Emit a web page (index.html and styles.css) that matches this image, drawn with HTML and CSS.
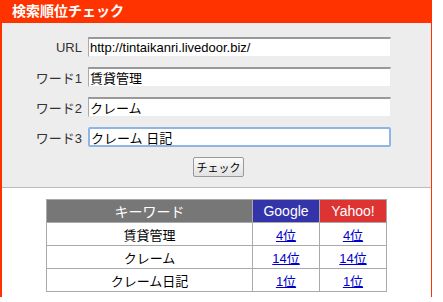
FILE: index.html
```html
<!DOCTYPE html>
<html lang="ja">
<head>
    <meta charset="UTF-8">
    <title>検索順位チェック</title>
    <link rel="stylesheet" href="styles.css">
</head>
<body>
    <div class="box">
        <div class="title">検索順位チェック</div>

        <form class="check-form">
            <div class="row">
                <label>URL</label>
                <input type="text" value="http://tintaikanri.livedoor.biz/">
            </div>
            <div class="row">
                <label>ワード1</label>
                <input type="text" value="賃貸管理">
            </div>
            <div class="row">
                <label>ワード2</label>
                <input type="text" value="クレーム">
            </div>
            <div class="row">
                <label>ワード3</label>
                <input type="text" class="focused" value="クレーム 日記">
            </div>
            <button type="button">チェック</button>
        </form>

        <div class="result">
            <table>
                <tr>
                    <th class="kw">キーワード</th>
                    <th class="google">Google</th>
                    <th class="yahoo">Yahoo!</th>
                </tr>
                <tr>
                    <td>賃貸管理</td>
                    <td><a href="#">4位</a></td>
                    <td><a href="#">4位</a></td>
                </tr>
                <tr>
                    <td>クレーム</td>
                    <td><a href="#">14位</a></td>
                    <td><a href="#">14位</a></td>
                </tr>
                <tr>
                    <td>クレーム日記</td>
                    <td><a href="#">1位</a></td>
                    <td><a href="#">1位</a></td>
                </tr>
            </table>
        </div>
    </div>
</body>
</html>
```

FILE: styles.css
```css
body {
    margin: 0;
    background-color: #fff;
    font-family: "Liberation Sans", "Noto Sans CJK JP", sans-serif;
    font-size: 13px;
    color: #000;
}

.box {
    width: 429px;
    border-left: 2px solid #ff3300;
    border-right: 1px solid #ff3300;
}

.title {
    height: 23px;
    line-height: 23px;
    padding-left: 10px;
    background-color: #ff3300;
    color: #fff;
    font-size: 14px;
    font-weight: bold;
}

.check-form {
    margin: 0;
    padding: 14px 0 10px;
    background-color: #ededed;
    border-bottom: 1px solid #bbb;
}

.row {
    display: flex;
    align-items: center;
    height: 20px;
    margin-bottom: 10px;
}

.row label {
    width: 80px;
    text-align: right;
    color: #333;
}

.row input {
    box-sizing: border-box;
    width: 303px;
    height: 20px;
    margin: 0 0 0 6px;
    padding: 0 1px;
    border: 1px solid #ececec;
    border-top: 2px solid #999;
    border-left: 1px solid #aaa;
    background-color: #fff;
    font-family: "Liberation Sans", "Noto Sans CJK JP", sans-serif;
    font-size: 13px;
    color: #000;
    outline: none;
}

.row input.focused {
    border: 2px solid #8fb4e6;
    border-radius: 2px;
}

.check-form button {
    display: block;
    box-sizing: border-box;
    width: 51px;
    height: 20px;
    margin: 0 auto;
    padding: 0;
    position: relative;
    left: 2px;
    border: 1px solid #999;
    border-radius: 2px;
    background: linear-gradient(#fafafa, #e2e2e2);
    font-family: "Noto Sans CJK JP", sans-serif;
    font-size: 11px;
    color: #000;
}

.result {
    padding: 11px 0 5px 44px;
}

table {
    border-collapse: collapse;
    width: 341px;
}

th, td {
    height: 22px;
    padding: 0;
    border: 1px solid #aaa;
    text-align: center;
    font-size: 13px;
}

th {
    color: #fff;
    font-weight: normal;
    font-size: 14px;
}

th.kw {
    width: 205px;
    background-color: #777;
}

th.google {
    width: 66px;
    background-color: #3333aa;
}

th.yahoo {
    background-color: #dd3333;
}

td a {
    color: #0000cc;
}
```
